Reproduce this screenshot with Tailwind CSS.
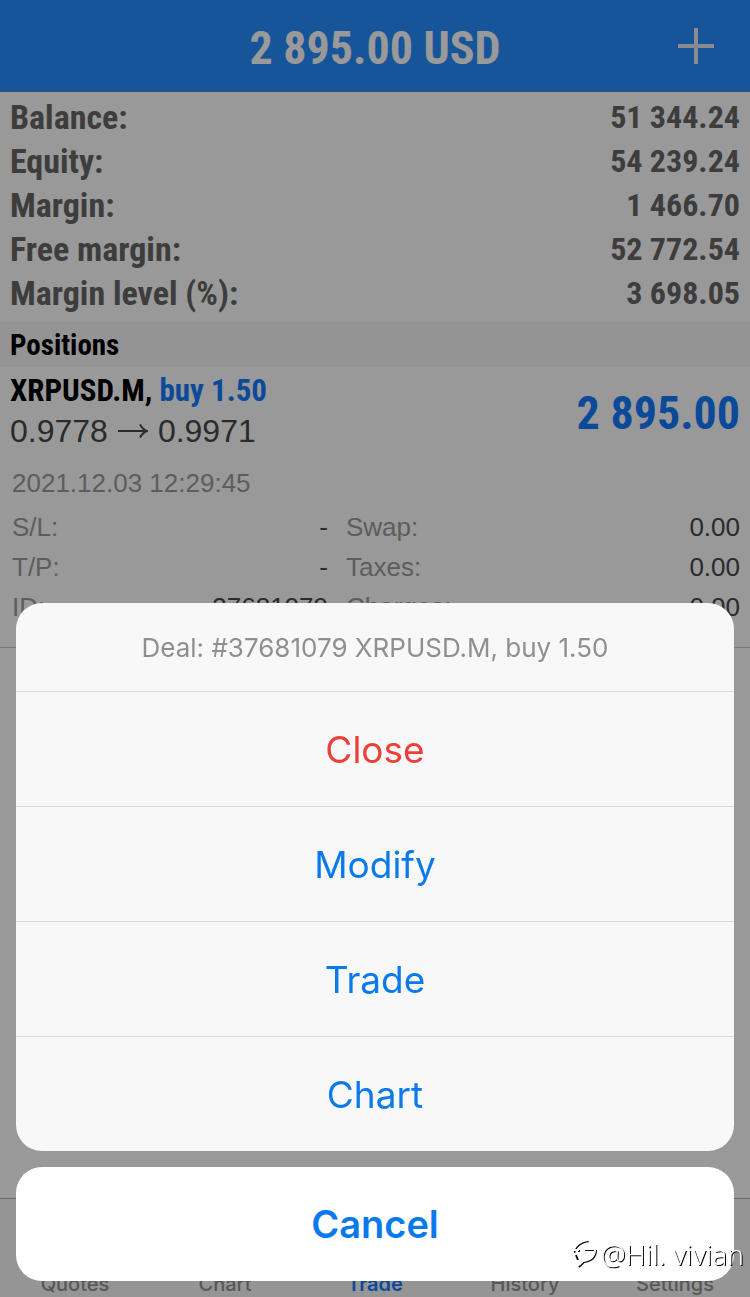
<!DOCTYPE html>
<html lang="en">

<head>
  <meta charset="utf-8" />
  <meta name="viewport" content="width=device-width, initial-scale=1" />
  <title>Trade - 2 895.00 USD</title>
  <script src="https://cdn.jsdelivr.net/npm/@tailwindcss/browser@4"></script>
</head>

<body class="bg-white h-screen overflow-hidden flex flex-col font-['Liberation_Sans',Arial,sans-serif]">
  <!-- Header -->
  <header class="relative bg-[#258eff] h-[92px] border-b border-[#5c86b8] flex items-center justify-center pt-1 shrink-0">
    <h1 class="text-white text-[46px] leading-none font-bold font-['Roboto_Condensed',sans-serif]">2 895.00 USD</h1>
    <button type="button" aria-label="New order" class="absolute right-9 top-7 text-[#e4e8ee]">
      <svg class="size-9" viewBox="0 0 36 36" fill="none" stroke="currentColor" stroke-width="4">
        <path d="M18 0v36M0 18h36" />
      </svg>
    </button>
  </header>

  <main class="flex-1">
    <!-- Account -->
    <dl class="px-[10px] pt-[3px] pb-[7px] text-[34px] leading-[44px] font-bold text-[#676767] font-['Roboto_Condensed',sans-serif]">
      <div class="flex justify-between"><dt>Balance:</dt><dd class="text-[32px]">51 344.24</dd></div>
      <div class="flex justify-between"><dt>Equity:</dt><dd class="text-[32px]">54 239.24</dd></div>
      <div class="flex justify-between"><dt>Margin:</dt><dd class="text-[32px]">1 466.70</dd></div>
      <div class="flex justify-between"><dt>Free margin:</dt><dd class="text-[32px]">52 772.54</dd></div>
      <div class="flex justify-between"><dt>Margin level (%):</dt><dd class="text-[32px]">3 698.05</dd></div>
    </dl>

    <!-- Positions -->
    <h2 class="bg-[#f7f7f7] px-[10px] pt-px text-[29px] leading-[44px] font-bold text-black font-['Roboto_Condensed',sans-serif]">Positions</h2>
    <section class="border-b border-[#cfcfcf] pb-5">
      <div class="flex items-center justify-between px-[10px] pt-1">
        <div>
          <p class="text-[31px] leading-[40px] font-bold text-black font-['Roboto_Condensed',sans-serif]">XRPUSD.M, <span class="text-[#147bff]">buy 1.50</span></p>
          <p class="flex items-center gap-[10px] text-[32px] leading-[40px] text-[#484848]">
            <span>0.9778</span>
            <svg class="w-[30px] h-4" viewBox="0 0 30 16" fill="none" stroke="currentColor" stroke-width="2">
              <path d="M0 8h29M22 1.500c2 3.500 4 5.500 7 6.500-3 1-5 3-7 6.500" />
            </svg>
            <span>0.9971</span>
          </p>
        </div>
        <p class="pt-1 text-[46px] leading-[56px] font-bold text-[#147bff] font-['Roboto_Condensed',sans-serif]">2 895.00</p>
      </div>
      <p class="px-3 pt-3 pb-1 text-[26px] leading-[40px] text-[#9c9c9c]">2021.12.03 12:29:45</p>
      <dl class="grid grid-cols-[316fr_394fr] gap-x-[18px] pl-3 pr-[10px] text-[26px] leading-[40px] text-[#484848]">
        <div class="flex justify-between"><dt class="text-[#9c9c9c]">S/L:</dt><dd>-</dd></div>
        <div class="flex justify-between"><dt class="text-[#9c9c9c]">Swap:</dt><dd>0.00</dd></div>
        <div class="flex justify-between"><dt class="text-[#9c9c9c]">T/P:</dt><dd>-</dd></div>
        <div class="flex justify-between"><dt class="text-[#9c9c9c]">Taxes:</dt><dd>0.00</dd></div>
        <div class="flex justify-between"><dt class="text-[#9c9c9c]">ID:</dt><dd>37681079</dd></div>
        <div class="flex justify-between"><dt class="text-[#9c9c9c]">Charges:</dt><dd>0.00</dd></div>
      </dl>
    </section>
  </main>

  <!-- Tab bar -->
  <nav class="grid grid-cols-5 items-end h-[99px] border-t border-[#b4b4b4] bg-[#f8f8f8] pb-px text-center text-[20px] leading-[24px] font-medium text-[#929292] font-[Inter,sans-serif] shrink-0">
    <a href="#quotes">Quotes</a>
    <a href="#chart">Chart</a>
    <a href="#trade" class="font-semibold text-[#147bff]">Trade</a>
    <a href="#history">History</a>
    <a href="#settings">Settings</a>
  </nav>

  <!-- Action sheet -->
  <div class="fixed inset-0 bg-black/40 flex flex-col justify-end gap-4 p-4 font-[Inter,sans-serif]">
    <div role="dialog" aria-labelledby="deal" class="rounded-[26px] bg-[#f8f8f8] overflow-hidden flex flex-col divide-y divide-[#d9d9dc] text-[37px] text-[#0a7aea]">
      <p id="deal" class="h-[89px] flex items-center justify-center pt-px text-[26px] text-[#8f8f8f]">Deal: #37681079 XRPUSD.M, buy 1.50</p>
      <button type="button" class="h-[115px] pt-px text-[#eb4037]">Close</button>
      <button type="button" class="h-[115px] pt-px">Modify</button>
      <button type="button" class="h-[115px] pt-px">Trade</button>
      <button type="button" class="h-[114px] pt-px">Chart</button>
    </div>
    <button type="button" class="h-[114px] shrink-0 rounded-[26px] bg-white text-[38px] font-semibold text-[#0a7aea]">Cancel</button>
  </div>

  <!-- Watermark -->
  <div class="fixed right-[6px] bottom-6 flex items-center pointer-events-none text-white">
    <svg class="size-7" viewBox="0 0 28 28" fill="none">
      <g stroke="#111" stroke-width="2">
        <path d="M2 13C3 7 8 3 16 2M1 11h6M12 10h11M23 10c0 7-4 11-12 12l-5 5M3 15l2 5" />
      </g>
      <g stroke="#fff" stroke-width="2">
        <path d="M3 14C4 8 9 4 17 3M1 10h5M12 9h10M22 9c0 7-4 11-12 12l-4 4" />
      </g>
    </svg>
    <span class="text-[28px] leading-[38px] font-['Noto_Sans',sans-serif] font-light [text-shadow:1px_1px_0_#000]">@Hil. vivian</span>
  </div>
</body>

</html>
